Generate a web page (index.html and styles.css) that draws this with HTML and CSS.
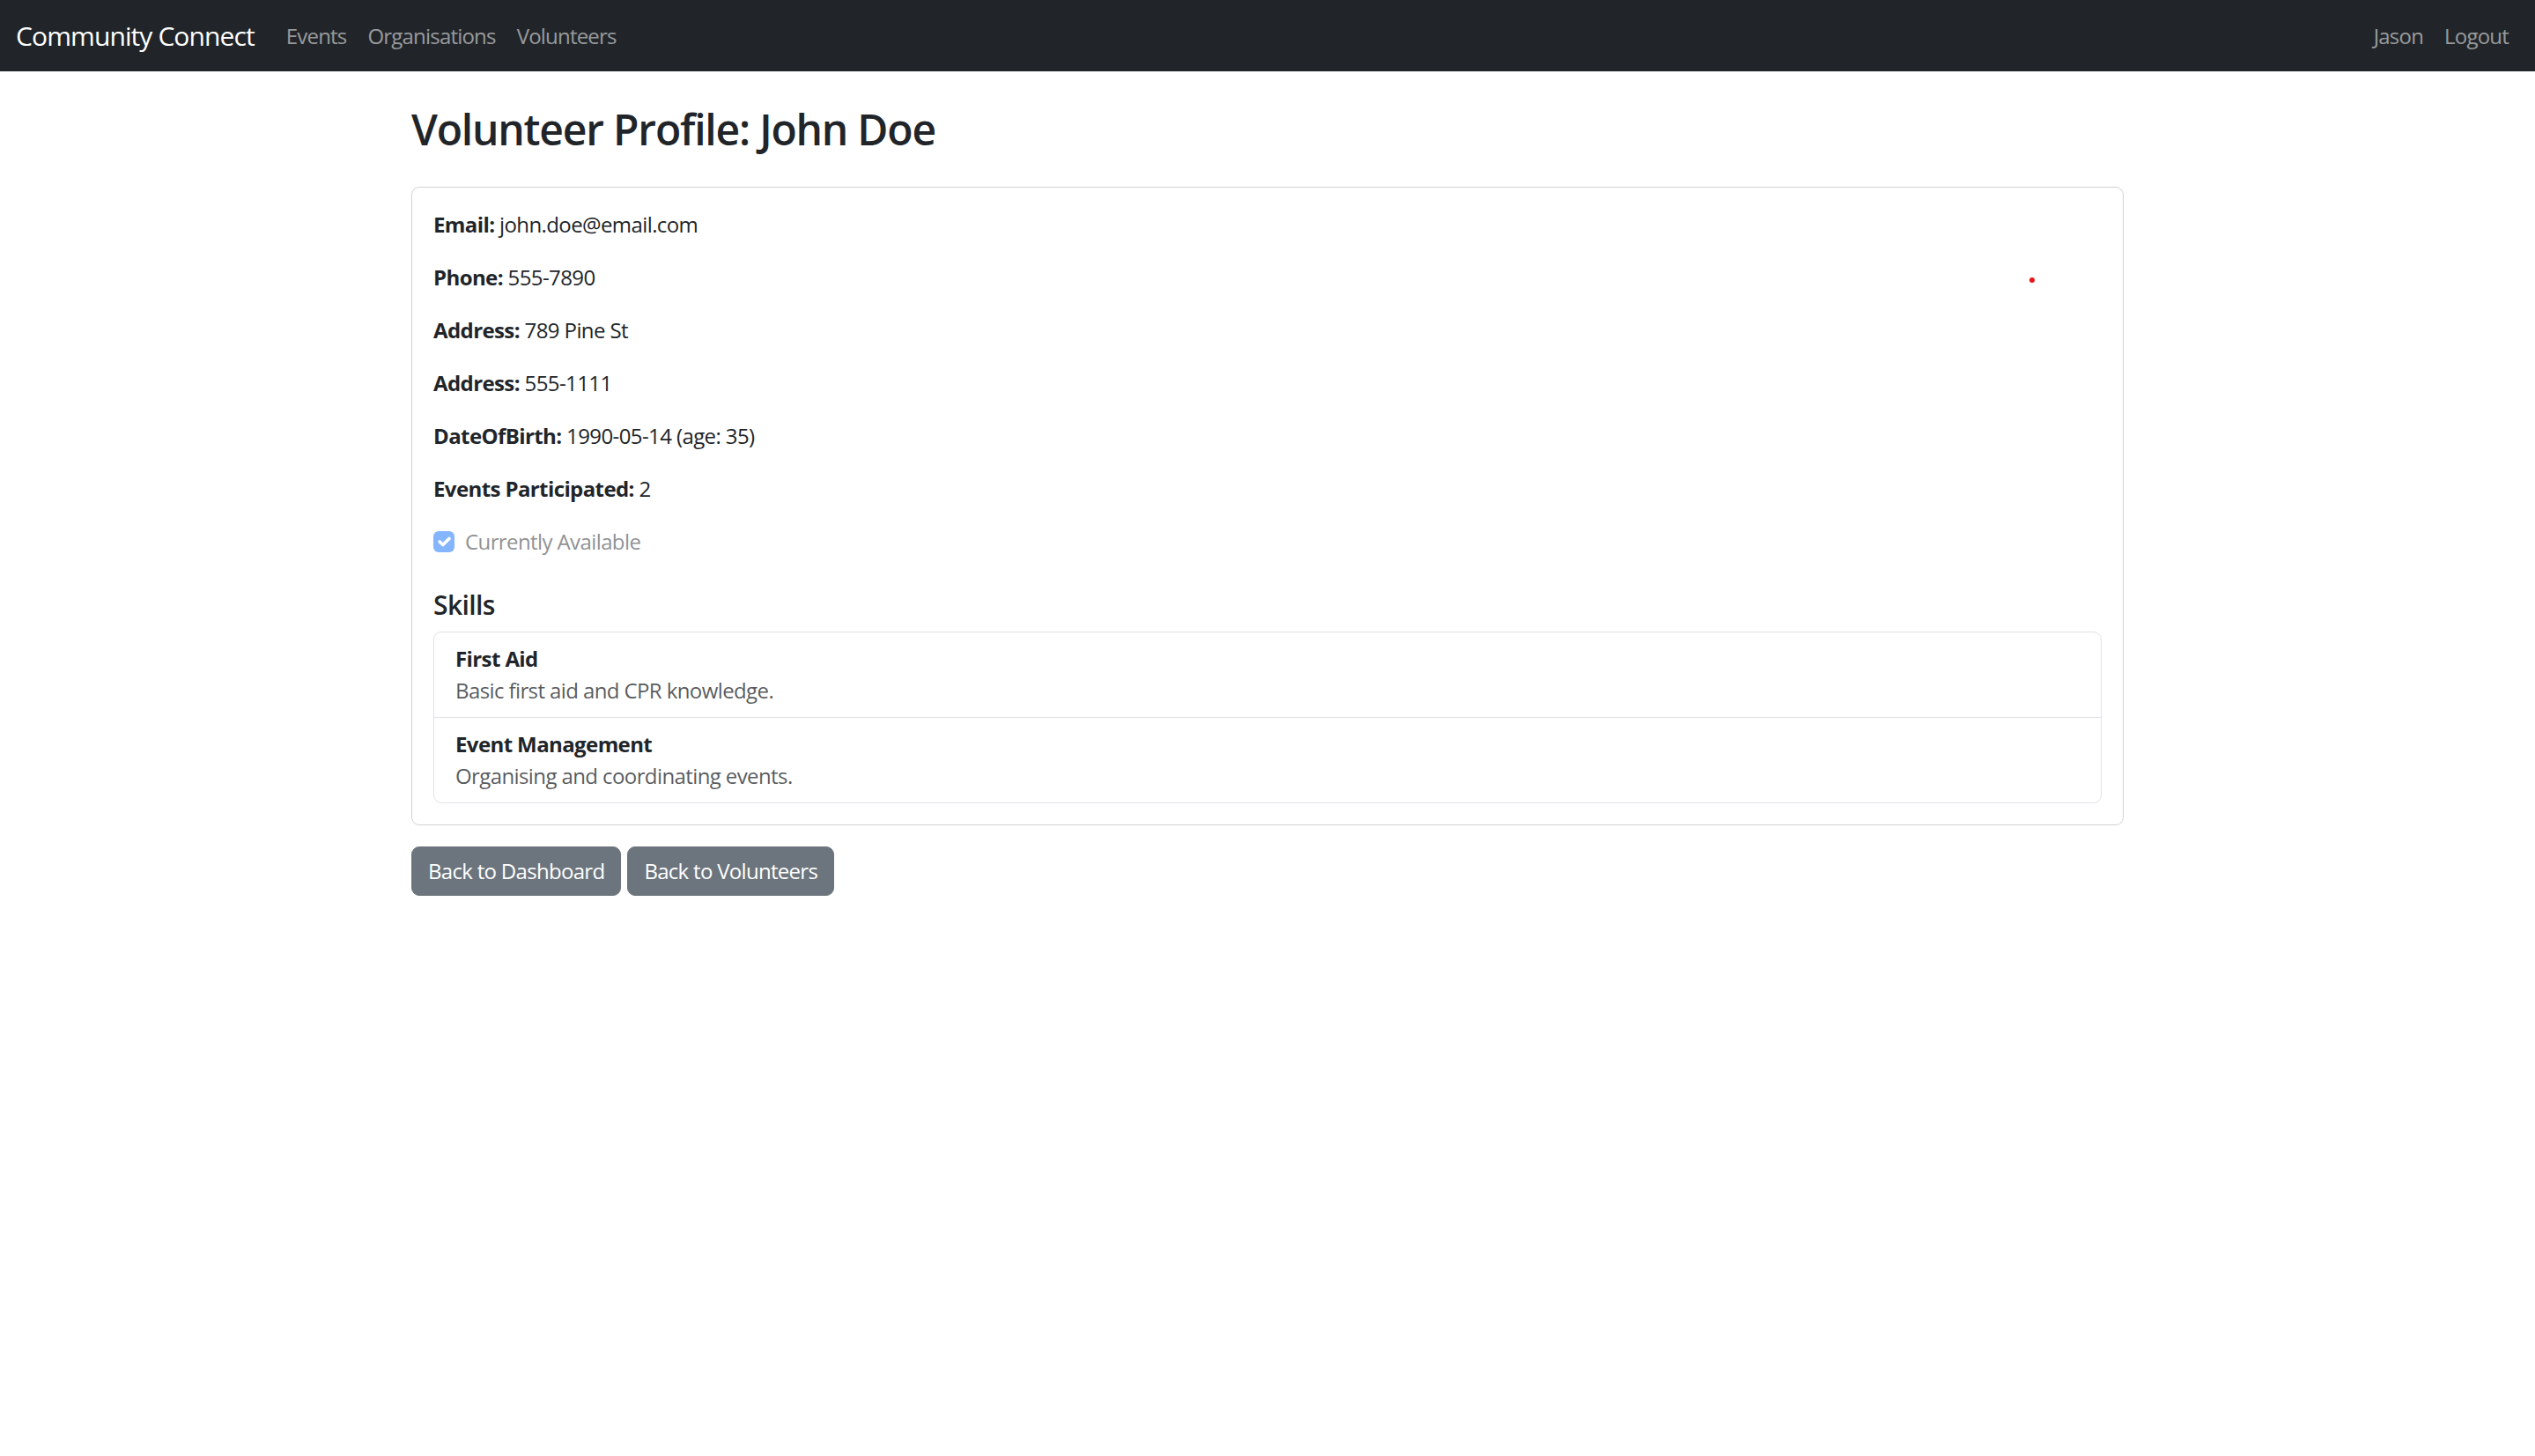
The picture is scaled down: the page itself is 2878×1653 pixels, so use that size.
FILE: index.html
```html
<!DOCTYPE html>
<html lang="en">
<head>
<meta charset="utf-8">
<title>Volunteer Profile: John Doe</title>
<link rel="stylesheet" href="styles.css">
</head>
<body>
<nav class="navbar">
  <div class="nav-inner">
    <a class="brand" href="#">Community Connect</a>
    <ul class="nav-links">
      <li><a href="#">Events</a></li>
      <li><a href="#">Organisations</a></li>
      <li><a href="#">Volunteers</a></li>
    </ul>
    <ul class="nav-links nav-right">
      <li><a href="#">Jason</a></li>
      <li><a href="#">Logout</a></li>
    </ul>
  </div>
</nav>
<main class="container">
  <h2 class="page-title">Volunteer Profile: John Doe</h2>
  <div class="card">
    <div class="card-body">
      <p class="field"><strong>Email:</strong> john.doe@email.com</p>
      <p class="field"><strong>Phone:</strong> 555-7890</p>
      <p class="field"><strong>Address:</strong> 789 Pine St</p>
      <p class="field"><strong>Address:</strong> 555-1111</p>
      <p class="field"><strong>DateOfBirth:</strong> 1990-05-14 (age: 35)</p>
      <p class="field"><strong>Events Participated:</strong> 2</p>
      <div class="form-check">
        <span class="check-box"><svg viewBox="0 0 20 20" width="24" height="24"><path d="M6 10l3 3l6-6" fill="none" stroke="#fff" stroke-width="3" stroke-linecap="round" stroke-linejoin="round"/></svg></span>
        <label class="check-label">Currently Available</label>
      </div>
      <h5 class="section-title">Skills</h5>
      <ul class="list-group">
        <li class="list-item">
          <div class="skill-name">First Aid</div>
          <div class="skill-desc">Basic first aid and CPR knowledge.</div>
        </li>
        <li class="list-item">
          <div class="skill-name">Event Management</div>
          <div class="skill-desc">Organising and coordinating events.</div>
        </li>
      </ul>
    </div>
  </div>
  <div class="actions">
    <a class="btn" href="#">Back to Dashboard</a>
    <a class="btn" href="#">Back to Volunteers</a>
  </div>
</main>
<span class="cursor-dot"></span>
</body>
</html>
```
FILE: styles.css
```css
* { box-sizing: border-box; }
html, body { margin: 0; padding: 0; }
body {
  font-family: "Open Sans", "Noto Sans", "Liberation Sans", sans-serif;
  font-size: 24px;
  line-height: 36px;
  color: #212529;
  background: #fff;
  letter-spacing: -0.6px;
}
a { text-decoration: none; }

.navbar {
  background: #212529;
  height: 81px;
  display: flex;
  align-items: center;
}
.nav-inner {
  width: 100%;
  padding: 0 18px;
  display: flex;
  align-items: center;
}
.brand {
  color: #fff;
  font-size: 30px;
  line-height: 45px;
  margin-right: 24px;
  letter-spacing: -0.9px;
}
.nav-links {
  list-style: none;
  margin: 0;
  padding: 0;
  display: flex;
}
.nav-links a {
  display: block;
  padding: 12px 12px;
  color: rgba(255,255,255,0.55);
  font-size: 24px;
  line-height: 36px;
  letter-spacing: -0.8px;
}
.nav-right { margin-left: auto; }

.container {
  max-width: 1980px;
  margin: 0 auto;
  padding: 37px 18px 0;
}
.page-title {
  font-size: 48px;
  font-weight: 600;
  line-height: 57.6px;
  margin: 0 0 36px;
  letter-spacing: -1.2px;
}
.card {
  border: 1px solid rgba(0,0,0,0.175);
  border-radius: 9px;
}
.card-body { padding: 24px; }
.field { margin: 0 0 24px; }
.field strong { font-weight: 700; }

.form-check {
  display: flex;
  align-items: center;
  height: 36px;
  margin-bottom: 36px;
}
.check-box {
  width: 24px;
  height: 24px;
  border-radius: 6px;
  background: #0d6efd;
  opacity: 0.5;
  display: flex;
  align-items: center;
  justify-content: center;
  margin-right: 12px;
}
.check-label { color: #212529; opacity: 0.5; }

.section-title {
  font-size: 30px;
  font-weight: 600;
  line-height: 36px;
  margin: 0 0 12px;
  letter-spacing: -0.6px;
}
.list-group {
  list-style: none;
  margin: 0;
  padding: 0;
  border: 1px solid #dee2e6;
  border-radius: 9px;
}
.list-item { padding: 12px 24px; }
.list-item + .list-item { border-top: 1px solid #dee2e6; }
.skill-name { font-weight: 700; }
.skill-desc { color: rgba(33,37,41,0.75); }

.actions {
  margin-top: 24px;
  display: flex;
  gap: 7px;
}
.btn {
  display: inline-block;
  background: #6c757d;
  color: #fff;
  border: 1px solid #6c757d;
  border-radius: 9px;
  padding: 9px 18px;
  line-height: 36px;
  font-size: 24px;
  letter-spacing: -0.7px;
}
.cursor-dot {
  position: absolute;
  left: 2304px;
  top: 315px;
  width: 6px;
  height: 6px;
  border-radius: 50%;
  background: #e8141b;
}
```
